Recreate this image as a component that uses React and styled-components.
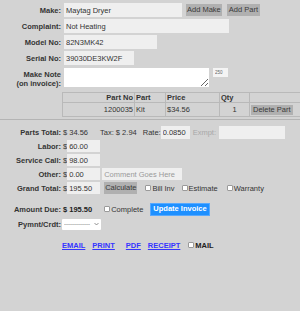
import React from "react";
import styled, { createGlobalStyle } from "styled-components";

const GlobalStyle = createGlobalStyle`
  html, body {
    margin: 0;
    padding: 0;
    background: #d3d3d3;
  }
  body {
    font-family: "Liberation Sans", Arial, sans-serif;
    font-size: 7.5px;
    color: #333;
  }
  * {
    box-sizing: border-box;
  }
`;

const Page = styled.div`
  width: 300px;
  min-height: 311px;
  padding-top: 3px;
  overflow: hidden;
`;

const Row = styled.div`
  display: flex;
  align-items: ${(p) => (p.$top ? "flex-start" : "center")};
  height: ${(p) => p.$h || 14}px;
  margin-top: ${(p) => p.$mt || 0}px;
  white-space: nowrap;
`;

const Label = styled.label`
  flex: none;
  width: 62px;
  padding-right: 1px;
  text-align: right;
  font-weight: bold;
  color: #333;
  line-height: 9px;
  padding-top: ${(p) => p.$pt || 0}px;
`;

const Field = styled.input`
  flex: none;
  width: ${(p) => p.$w}px;
  height: ${(p) => p.$h || 14}px;
  margin: 0 0 0 ${(p) => p.$ml || 0}px;
  padding: 0 2px;
  border: none;
  outline: none;
  border-radius: 0;
  background: ${(p) => p.$bg || "#efefef"};
  font: inherit;
  font-size: ${(p) => p.$fs || 7.5}px;
  color: ${(p) => p.$color || "#333"};

  &::placeholder {
    color: #9a9a9a;
  }
`;

const Note = styled.textarea`
  flex: none;
  width: 145px;
  height: 19px;
  margin: 0 0 0 2px;
  padding: 1px 2px;
  border: none;
  outline: none;
  background: #fff;
  font: inherit;
  resize: both;
`;

const Button = styled.button`
  flex: none;
  height: ${(p) => p.$h || 12}px;
  margin: 0 0 0 ${(p) => p.$ml || 0}px;
  padding: 0 ${(p) => p.$px ?? 2}px;
  border: none;
  border-radius: 0;
  background: #b0b0b0;
  color: #3a3a3a;
  font: inherit;
  line-height: 1;
  cursor: pointer;
`;

const BlueButton = styled(Button)`
  height: 13px;
  padding: 0 2px;
  background: #1e90ff;
  border: 1px solid #57a9ff;
  color: #fff;
  font-weight: bold;
`;

const Table = styled.table`
  margin: 5px 0 0 62px;
  width: 240px;
  border-collapse: collapse;
  table-layout: fixed;
`;

const Th = styled.th`
  height: 10px;
  padding: 0 1px;
  border: 1px solid #b9b9b9;
  font-weight: bold;
  color: #333;
  text-align: ${(p) => p.$align || "left"};
  line-height: 8px;
`;

const Td = styled.td`
  height: 14px;
  padding: 0 1px;
  border: 1px solid #b9b9b9;
  color: #333;
  text-align: ${(p) => p.$align || "left"};
`;

const Rule = styled.div`
  height: 1px;
  margin-top: 2px;
  background: #b4b4b4;
`;

const Text = styled.span`
  margin-left: ${(p) => p.$ml || 0}px;
  color: ${(p) => p.$color || "#333"};
  font-weight: ${(p) => (p.$bold ? "bold" : "normal")};
`;

const Check = styled.input.attrs({ type: "checkbox" })`
  appearance: none;
  flex: none;
  width: 6px;
  height: 6px;
  margin: 0 1px 0 ${(p) => p.$ml || 0}px;
  background: #fff;
  border: 1px solid #9a9a9a;
  border-radius: 1px;
`;

const SelectBox = styled.div`
  position: relative;
  flex: none;
  width: 39px;
  height: 11px;
  background: #fff;
  border-radius: 1px;
`;

const Select = styled.select`
  appearance: none;
  width: 100%;
  height: 100%;
  margin: 0;
  padding: 0 2px;
  border: none;
  outline: none;
  background: transparent;
  font: inherit;
  font-size: 6px;
  color: #555;
`;

const Chevron = styled.svg`
  position: absolute;
  right: 2px;
  top: 3px;
  pointer-events: none;
`;

const Link = styled.a`
  margin-left: ${(p) => p.$ml || 0}px;
  color: #3535ff;
  font-weight: bold;
  text-decoration: underline;
`;

const Bold = styled.span`
  font-weight: bold;
  color: #222;
`;

export default function App() {
  return (
    <>
      <GlobalStyle />
      <Page>
        <Row>
          <Label>Make:</Label>
          <Field $w={118} $ml={2} defaultValue="Maytag Dryer" />
          <Button $ml={4} $px={1}>Add Make</Button>
          <Button $ml={5}>Add Part</Button>
        </Row>
        <Row $mt={2}>
          <Label>Complaint:</Label>
          <Field $w={165} $ml={2} defaultValue="Not Heating" />
        </Row>
        <Row $mt={2}>
          <Label>Model No:</Label>
          <Field $w={93} $ml={2} defaultValue="82N3MK42" />
        </Row>
        <Row $mt={2}>
          <Label>Serial No:</Label>
          <Field $w={70} $ml={2} defaultValue="39030DE3KW2F" />
        </Row>
        <Row $mt={3} $h={19} $top>
          <Label $pt={2}>
            Make Note
            <br />
            (on invoice):
          </Label>
          <Note />
          <Field $w={15} $h={9} $ml={4} $fs={4.5} $bg="#f4f4f4" $color="#666" defaultValue="250" />
        </Row>

        <Table>
          <colgroup>
            <col style={{ width: 72 }} />
            <col style={{ width: 31 }} />
            <col style={{ width: 54 }} />
            <col style={{ width: 30 }} />
            <col />
          </colgroup>
          <thead>
            <tr>
              <Th $align="right">Part No</Th>
              <Th>Part</Th>
              <Th>Price</Th>
              <Th>Qty</Th>
              <Th />
            </tr>
          </thead>
          <tbody>
            <tr>
              <Td $align="right">1200035</Td>
              <Td>Kit</Td>
              <Td>$34.56</Td>
              <Td $align="center">1</Td>
              <Td>
                <Button $h={10}>Delete Part</Button>
              </Td>
            </tr>
          </tbody>
        </Table>
        <Rule />

        <Row $mt={6} $h={12}>
          <Label>Parts Total:</Label>
          <Text $ml={1}>$ 34.56</Text>
          <Text $ml={12}>Tax: $ 2.94</Text>
          <Text $ml={6}>Rate:</Text>
          <Field $w={29} $h={13} defaultValue="0.0850" />
          <Text $ml={3} $color="#a8a8a8">Exmpt:</Text>
          <Field $w={66} $h={13} $ml={3} />
        </Row>
        <Row $mt={2} $h={12}>
          <Label>Labor:</Label>
          <Text $ml={1}>$</Text>
          <Field $w={33} $h={12} defaultValue="60.00" />
        </Row>
        <Row $mt={2} $h={12}>
          <Label>Service Call:</Label>
          <Text $ml={1}>$</Text>
          <Field $w={33} $h={12} defaultValue="98.00" />
        </Row>
        <Row $mt={2} $h={12}>
          <Label>Other:</Label>
          <Text $ml={1}>$</Text>
          <Field $w={33} $h={12} defaultValue="0.00" />
          <Field $w={80} $h={12} $ml={2} placeholder="Comment Goes Here" />
        </Row>
        <Row $mt={2} $h={12}>
          <Label>Grand Total:</Label>
          <Text $ml={1}>$</Text>
          <Field $w={33} $h={12} defaultValue="195.50" />
          <Button $ml={4} $px={1}>Calculate</Button>
          <Check $ml={8} />
          <Text>Bill Inv</Text>
          <Check $ml={7} />
          <Text>Estimate</Text>
          <Check $ml={9} />
          <Text>Warranty</Text>
        </Row>

        <Row $mt={8} $h={14}>
          <Label>Amount Due:</Label>
          <Bold style={{ marginLeft: 1 }}>$ 195.50</Bold>
          <Check $ml={12} />
          <Text>Complete</Text>
          <BlueButton $ml={7}>Update Invoice</BlueButton>
        </Row>
        <Row $mt={2} $h={12}>
          <Label>Pymnt/Crdt:</Label>
          <SelectBox>
            <Select defaultValue="">
              <option value="">-------------</option>
            </Select>
            <Chevron width="5" height="4" viewBox="0 0 10 6">
              <path d="M1 1l4 4 4-4" fill="none" stroke="#666" strokeWidth="1.4" />
            </Chevron>
          </SelectBox>
        </Row>

        <Row $mt={9} $h={12}>
          <Link href="#" $ml={62}>EMAIL</Link>
          <Link href="#" $ml={7}>PRINT</Link>
          <Link href="#" $ml={11}>PDF</Link>
          <Link href="#" $ml={7}>RECEIPT</Link>
          <Check $ml={8} />
          <Bold>MAIL</Bold>
        </Row>
      </Page>
    </>
  );
}
